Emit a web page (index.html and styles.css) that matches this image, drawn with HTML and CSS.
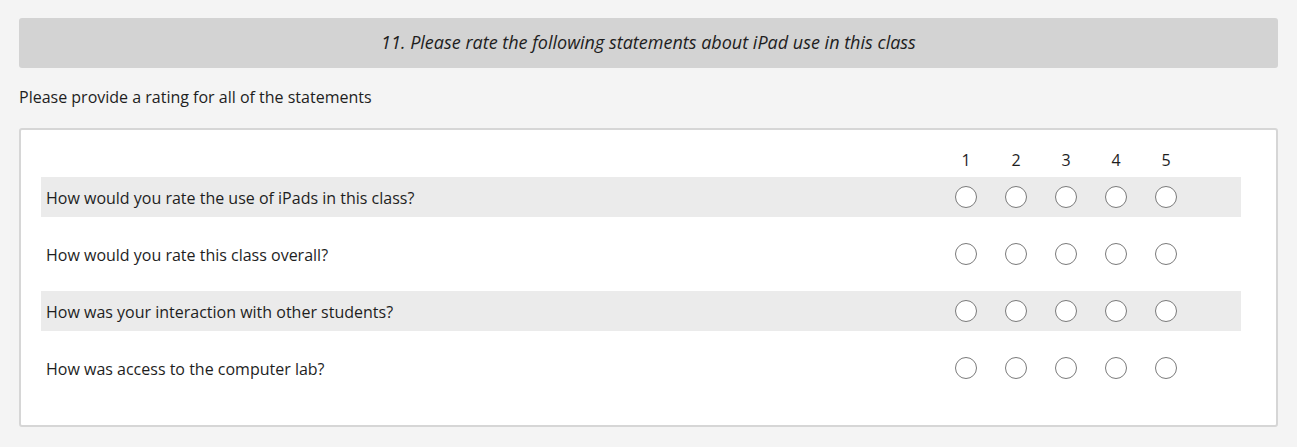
FILE: index.html
```html
<!DOCTYPE html>
<html>
<head>
<meta charset="utf-8">
<link rel="stylesheet" href="styles.css">
</head>
<body>
<div class="page">
  <div class="qhead">11. Please rate the following statements about iPad use in this class</div>
  <div class="instr">Please provide a rating for all of the statements</div>
  <div class="box">
    <div class="grid">
      <div class="row head">
        <div class="label"></div>
        <div class="opt">1</div><div class="opt">2</div><div class="opt">3</div><div class="opt">4</div><div class="opt">5</div>
      </div>
      <div class="row shaded">
        <div class="label">How would you rate the use of iPads in this class?</div>
        <div class="opt"><span class="radio"></span></div><div class="opt"><span class="radio"></span></div><div class="opt"><span class="radio"></span></div><div class="opt"><span class="radio"></span></div><div class="opt"><span class="radio"></span></div>
      </div>
      <div class="row">
        <div class="label">How would you rate this class overall?</div>
        <div class="opt"><span class="radio"></span></div><div class="opt"><span class="radio"></span></div><div class="opt"><span class="radio"></span></div><div class="opt"><span class="radio"></span></div><div class="opt"><span class="radio"></span></div>
      </div>
      <div class="row shaded">
        <div class="label">How was your interaction with other students?</div>
        <div class="opt"><span class="radio"></span></div><div class="opt"><span class="radio"></span></div><div class="opt"><span class="radio"></span></div><div class="opt"><span class="radio"></span></div><div class="opt"><span class="radio"></span></div>
      </div>
      <div class="row">
        <div class="label">How was access to the computer lab?</div>
        <div class="opt"><span class="radio"></span></div><div class="opt"><span class="radio"></span></div><div class="opt"><span class="radio"></span></div><div class="opt"><span class="radio"></span></div><div class="opt"><span class="radio"></span></div>
      </div>
    </div>
  </div>
</div>
</body>
</html>
```

FILE: styles.css
```css
html, body {
  margin: 0;
  padding: 0;
  background: #f4f4f4;
  font-family: "Open Sans", "Liberation Sans", sans-serif;
  color: #1e1e1e;
}
.page {
  padding: 18px 19px 0 19px;
}
.qhead {
  height: 50px;
  box-sizing: border-box;
  padding-bottom: 2px;
  background: #d3d3d3;
  border-radius: 3px;
  display: flex;
  align-items: center;
  justify-content: center;
  font-style: italic;
  font-size: 18px;
}
.instr {
  margin-top: 18px;
  font-size: 16px;
  line-height: 22px;
}
.box {
  margin-top: 20px;
  background: #fff;
  border: 2px solid #d6d6d6;
  border-radius: 3px;
  height: 299px;
  box-sizing: border-box;
  padding: 18px 35px 0 20px;
}
.grid {
  display: flex;
  flex-direction: column;
  gap: 17px;
}
.row {
  display: flex;
  align-items: center;
  height: 40px;
  padding-right: 50px;
}
.row.head {
  height: 24px;
  margin-bottom: -12px;
}
.row.shaded {
  background: #ebebeb;
}
.label {
  flex: 1;
  padding-left: 5px;
  padding-top: 2px;
  font-size: 16px;
}
.opt {
  width: 50px;
  display: flex;
  justify-content: center;
  align-items: center;
  font-size: 16px;
}
.radio {
  width: 22px;
  height: 22px;
  box-sizing: border-box;
  border: 1px solid #7a7a7a;
  border-radius: 50%;
  background: #fff;
}
```
